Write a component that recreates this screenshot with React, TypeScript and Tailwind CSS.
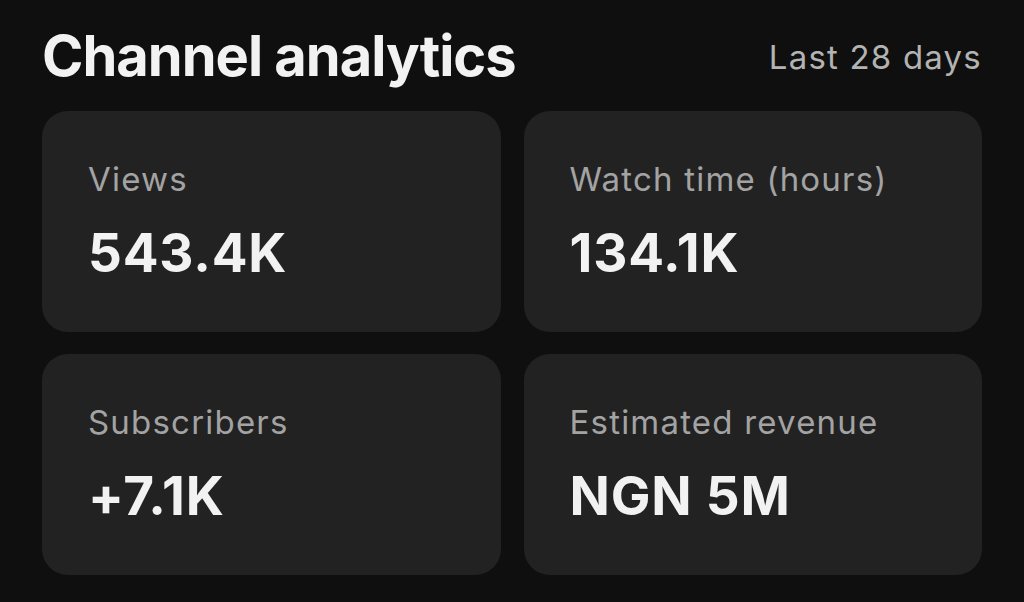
const stats = [
  { label: "Views", value: "543.4K" },
  { label: "Watch time (hours)", value: "134.1K" },
  { label: "Subscribers", value: "+7.1K" },
  { label: "Estimated revenue", value: "NGN 5M" },
];

function StatCard({ label, value }: { label: string; value: string }) {
  return (
    <div className="flex h-[221px] flex-col rounded-[26px] bg-[#222222] px-[46px] pt-[48px]">
      <span className="text-[33px] leading-[40px] tracking-[1.2px] text-[#a3a3a3]">{label}</span>
      <span className="mt-[24px] text-[53px] font-bold leading-[60px] tracking-[0.8px] text-[#f2f2f2]">
        {value}
      </span>
    </div>
  );
}

export default function App() {
  return (
    <div
      className="h-[602px] w-[1024px] overflow-hidden bg-[#0f0f0f] px-[42px]"
      style={{ fontFamily: "Inter, 'Noto Sans', sans-serif" }}
    >
      <div className="flex h-[111px] items-start justify-between pt-[22px]">
        <h1 className="text-[56px] font-bold leading-[68px] tracking-[-1px] text-[#f2f2f2]">
          Channel analytics
        </h1>
        <span className="mt-[15px] text-[33px] leading-[40px] tracking-[1.2px] text-[#b3b3b3]">
          Last 28 days
        </span>
      </div>
      <div className="grid grid-cols-2 gap-x-[23px] gap-y-[22px]">
        {stats.map((s) => (
          <StatCard key={s.label} label={s.label} value={s.value} />
        ))}
      </div>
    </div>
  );
}
